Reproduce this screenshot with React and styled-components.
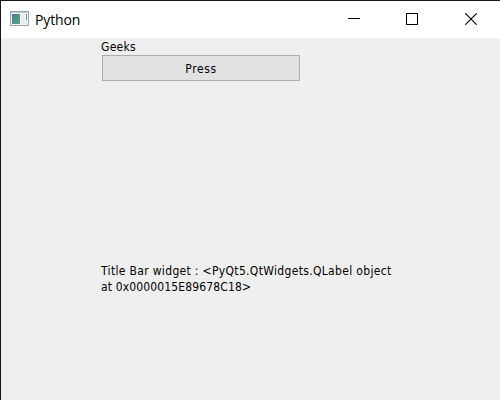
import React from "react";
import styled, { createGlobalStyle } from "styled-components";

const GlobalStyle = createGlobalStyle`
  * { box-sizing: border-box; }
  html, body { margin: 0; padding: 0; overflow: hidden; }
`;

const Window = styled.div`
  width: 500px;
  height: 400px;
  display: flex;
  flex-direction: column;
  background: #efefef;
  border-top: 1px solid #18151a;
  border-left: 1px solid #18151a;
  color: #000;
`;

const TitleBar = styled.header`
  height: 37px;
  flex: none;
  display: flex;
  align-items: center;
  padding-left: 9px;
  background: #fff;
`;

const AppIcon = styled.svg`
  display: block;
  flex: none;
  width: 20px;
  height: 16px;
  margin-bottom: 1px;
`;

const Title = styled.h1`
  flex: 1;
  margin: 0 0 0 5px;
  font: 400 14px/20px "Open Sans", sans-serif;
  letter-spacing: -0.15px;
`;

const Controls = styled.div`
  display: flex;
  align-self: flex-start;
  height: 36px;
  margin-right: -1px;
`;

const ControlButton = styled.button`
  width: ${(p) => p.$width}px;
  padding: 0;
  border: 0;
  background: transparent;
  display: flex;
  align-items: center;
  justify-content: center;
  svg { display: block; }
`;

const Content = styled.main`
  display: flex;
  flex-direction: column;
  align-items: flex-start;
  padding: 1px 0 0 100px;
`;

const Label = styled.p`
  margin: ${(p) => p.$top || 0}px 0 0;
  width: 300px;
  font: 400 12px/16px "DejaVu Sans Condensed", "DejaVu Sans", sans-serif;
  font-stretch: condensed;
  letter-spacing: ${(p) => p.$spacing || 0}px;
`;

const Line = styled.span`
  display: block;
  white-space: nowrap;
  letter-spacing: ${(p) => p.$spacing}px;
`;

const PushButton = styled.button`
  width: 198px;
  height: 26px;
  margin: 0 0 0 1px;
  padding: 1px 0 0;
  border: 1px solid #adadad;
  background: #e1e1e1;
  color: #000;
  font: 400 12px/16px "DejaVu Sans Condensed", "DejaVu Sans", sans-serif;
  font-stretch: condensed;
  letter-spacing: 0.6px;
`;

export default function App() {
  return (
    <>
      <GlobalStyle />
      <Window>
        <TitleBar>
          <AppIcon viewBox="0 0 20 16">
            <defs>
              <linearGradient id="pane" x1="0" y1="0" x2="1" y2="1">
                <stop offset="0" stopColor="#47799a" />
                <stop offset="1" stopColor="#58ab80" />
              </linearGradient>
            </defs>
            <rect x="0.5" y="0.5" width="18" height="14" fill="#f3f4f5" stroke="#9da3a8" />
            <rect x="1" y="1" width="17" height="1" fill="#c4cbcf" />
            <rect x="2" y="3" width="8" height="10" fill="url(#pane)" />
            <rect x="11" y="3" width="4" height="10" fill="#e9eaec" />
            <rect x="16" y="3" width="1" height="6" fill="#579b99" />
            <rect x="16" y="9" width="1" height="4" fill="#dce5e2" />
          </AppIcon>
          <Title>Python</Title>
          <Controls>
            <ControlButton $width={58} aria-label="Minimize">
              <svg width="12" height="12" shapeRendering="crispEdges">
                <rect y="5" width="12" height="1" />
              </svg>
            </ControlButton>
            <ControlButton $width={58} aria-label="Maximize">
              <svg width="12" height="12" shapeRendering="crispEdges">
                <rect x="0.5" y="0.5" width="11" height="11" fill="none" stroke="#000" />
              </svg>
            </ControlButton>
            <ControlButton $width={60} aria-label="Close">
              <svg width="12" height="12">
                <path d="M0.2 0.2L11.8 11.8M11.8 0.2L0.2 11.8" stroke="#000" strokeWidth="1.1" />
              </svg>
            </ControlButton>
          </Controls>
        </TitleBar>
        <Content>
          <Label $spacing={0.3}>Geeks</Label>
          <PushButton>Press</PushButton>
          <Label $top={182}>
            <Line $spacing={0.33}>Title Bar widget : &lt;PyQt5.QtWidgets.QLabel object</Line>
            <Line $spacing={0.14}>at 0x0000015E89678C18&gt;</Line>
          </Label>
        </Content>
      </Window>
    </>
  );
}
